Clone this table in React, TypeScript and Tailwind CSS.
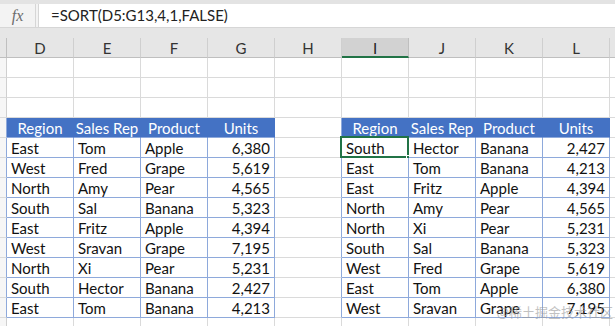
import React from "react";

const cols = ["D", "E", "F", "G", "H", "I", "J", "K", "L"];

type Row = [string, string, string, string];

const left: Row[] = [
  ["East", "Tom", "Apple", "6,380"],
  ["West", "Fred", "Grape", "5,619"],
  ["North", "Amy", "Pear", "4,565"],
  ["South", "Sal", "Banana", "5,323"],
  ["East", "Fritz", "Apple", "4,394"],
  ["West", "Sravan", "Grape", "7,195"],
  ["North", "Xi", "Pear", "5,231"],
  ["South", "Hector", "Banana", "2,427"],
  ["East", "Tom", "Banana", "4,213"],
];

const right: Row[] = [
  ["South", "Hector", "Banana", "2,427"],
  ["East", "Tom", "Banana", "4,213"],
  ["East", "Fritz", "Apple", "4,394"],
  ["North", "Amy", "Pear", "4,565"],
  ["North", "Xi", "Pear", "5,231"],
  ["South", "Sal", "Banana", "5,323"],
  ["West", "Fred", "Grape", "5,619"],
  ["East", "Tom", "Apple", "6,380"],
  ["West", "Sravan", "Grape", "7,195"],
];

const header: Row = ["Region", "Sales Rep", "Product", "Units"];

type Kind = "plain" | "head" | "data";

function Cell({
  text = "",
  kind = "plain",
  rightBlue = false,
  alignRight = false,
  selected = false,
}: {
  text?: string;
  kind?: Kind;
  rightBlue?: boolean;
  alignRight?: boolean;
  selected?: boolean;
}) {
  let cls =
    "relative h-[20px] border-r border-b flex items-center pt-[2px] overflow-visible whitespace-nowrap text-[15px] leading-none ";
  if (kind === "head") {
    cls += "bg-[#4472c4] text-white justify-center border-r-[#4472c4] border-b-[#8ea9db] ";
    if (rightBlue) cls += "border-r-[#8ea9db] ";
  } else if (kind === "data") {
    cls += "bg-white text-[#111] border-[#8ea9db] ";
    cls += alignRight ? "justify-end pr-[4px] " : "pl-[4px] ";
  } else {
    cls += "bg-white border-b-[#dadada] ";
    cls += rightBlue ? "border-r-[#8ea9db] " : "border-r-[#dadada] ";
  }
  return (
    <div className={cls}>
      {text}
      {selected && (
        <div className="absolute left-[-2px] top-[-2px] right-[-1px] bottom-[-1px] border-2 border-[#217346] pointer-events-none">
          <div className="absolute right-[-4px] bottom-[-4px] w-[5px] h-[5px] bg-[#217346] border border-white" />
        </div>
      )}
    </div>
  );
}

function RowHead({ blue = false }: { blue?: boolean }) {
  return (
    <div
      className={
        "h-[20px] bg-[#f6f6f6] border-b border-r border-b-[#dadada] " +
        (blue ? "border-r-[#8ea9db]" : "border-r-[#cfcfcf]")
      }
    />
  );
}

export default function App() {
  const emptyRow = (i: number) => (
    <React.Fragment key={"e" + i}>
      <RowHead />
      {cols.map((c) => (
        <Cell key={c} />
      ))}
      <div className="h-[20px] bg-white border-b border-[#dadada]" />
    </React.Fragment>
  );

  const tableRow = (l: Row | null, r: Row | null, i: number, isHead: boolean) => (
    <React.Fragment key={"t" + i}>
      <RowHead blue />
      {(isHead ? header : (l as Row)).map((t, j) => (
        <Cell
          key={"l" + j}
          text={t}
          kind={isHead ? "head" : "data"}
          alignRight={j === 3}
          rightBlue={j === 3}
        />
      ))}
      <Cell rightBlue />
      {(isHead ? header : (r as Row)).map((t, j) => (
        <Cell
          key={"r" + j}
          text={t}
          kind={isHead ? "head" : "data"}
          alignRight={j === 3}
          rightBlue={j === 3}
          selected={!isHead && i === 1 && j === 0}
        />
      ))}
      <div className="h-[20px] bg-white border-b border-[#dadada]" />
    </React.Fragment>
  );

  return (
    <div
      className="relative w-[615px] h-[326px] overflow-hidden bg-white"
      style={{ fontFamily: "Lato, 'Liberation Sans', Arial, sans-serif" }}
    >
      {/* top strip */}
      <div className="h-[4px] bg-[#e3e3e3]" />
      {/* formula bar */}
      <div className="flex h-[24px] bg-[#f3f3f3] border-b border-[#d6d6d6]">
        <div className="w-[36px] flex items-center justify-center border-r border-[#d6d6d6]">
          <span
            className="text-[16px] italic text-[#6b6b6b]"
            style={{ fontFamily: "'Liberation Serif', 'DejaVu Serif', serif" }}
          >
            fx
          </span>
        </div>
        <div className="ml-[2px] flex-1 bg-white border-l border-[#d6d6d6] flex items-center pl-[12px] text-[15px] text-[#222]">
          =SORT(D5:G13,4,1,FALSE)
        </div>
      </div>
      {/* gap */}
      <div className="h-[10px] bg-[#e6e6e6]" />
      {/* grid */}
      <div className="grid grid-cols-[7px_repeat(9,67px)_1fr]">
        {/* column headers */}
        <div className="h-[20px] bg-[#e6e6e6] border-b border-r border-[#bfbfbf]" />
        {cols.map((c) =>
          c === "I" ? (
            <div
              key={c}
              className="h-[20px] bg-[#d2d2d2] border-r border-r-[#bfbfbf] border-b-2 border-b-[#217346] flex items-center justify-center pt-[2px] text-[15px] leading-none text-[#222]"
            >
              {c}
            </div>
          ) : (
            <div
              key={c}
              className="h-[20px] bg-[#e6e6e6] border-r border-b border-r-[#cfcfcf] border-b-[#bfbfbf] flex items-center justify-center pt-[2px] text-[15px] leading-none text-[#333]"
            >
              {c}
            </div>
          )
        )}
        <div className="h-[20px] bg-[#e6e6e6] border-b border-[#bfbfbf]" />

        {emptyRow(0)}
        {emptyRow(1)}
        {emptyRow(2)}
        {tableRow(null, null, 0, true)}
        {left.map((l, i) => tableRow(l, right[i], i + 1, false))}
        {emptyRow(3)}
      </div>

      {/* watermark */}
      <div
        className="absolute right-[2px] bottom-[5px] text-[13px] text-[#9a9a9a] opacity-60 pointer-events-none whitespace-nowrap"
        style={{ fontFamily: "'Noto Sans CJK SC', sans-serif" }}
      >
        @稀土掘金技术社区
      </div>
    </div>
  );
}
